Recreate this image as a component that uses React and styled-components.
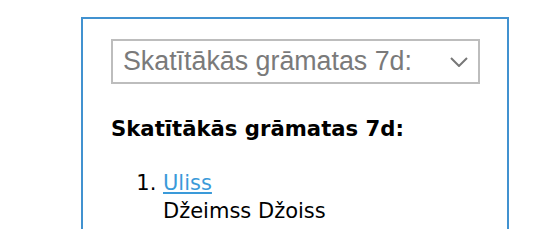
import React from "react";
import styled, { createGlobalStyle } from "styled-components";

const Global = createGlobalStyle`
  html, body { margin: 0; padding: 0; background: #fff; }
  body { font-family: "DejaVu Sans", Verdana, sans-serif; }
`;

const Page = styled.div`
  padding: 17px 0 0 81px;
  height: 229px;
  box-sizing: border-box;
  overflow: hidden;
`;

const Panel = styled.section`
  width: 428px;
  height: 260px;
  box-sizing: border-box;
  border: 2px solid #4192d0;
  padding: 20px 27px 0 28px;
`;

const SelectBox = styled.div`
  display: flex;
  align-items: center;
  justify-content: space-between;
  height: 45px;
  box-sizing: border-box;
  border: 2px solid #bdbdbd;
  padding: 0 10px 0 10px;
  font-family: "Liberation Sans", Arial, sans-serif;
  font-size: 26.8px;
  color: #7a7a7a;
`;

const Heading = styled.h3`
  margin: 32px 0 0;
  font-family: "DejaVu Sans", Verdana, sans-serif;
  font-weight: bold;
  font-size: 21.2px;
  line-height: 25px;
  color: #000;
`;

const List = styled.ol`
  margin: 28px 0 0;
  padding-left: 52px;
  font-size: 21px;
  line-height: 28px;
  color: #000;
`;

const BookLink = styled.a`
  color: #3a9ad9;
  text-decoration: underline;
`;

const Chevron = () => (
  <svg width="18" height="10" viewBox="0 0 18 10">
    <polyline points="1,1 9,9 17,1" fill="none" stroke="#777" strokeWidth="2" />
  </svg>
);

export default function App() {
  return (
    <>
      <Global />
      <Page>
        <Panel>
          <SelectBox>
            <span>Skatītākās grāmatas 7d:</span>
            <Chevron />
          </SelectBox>
          <Heading>Skatītākās grāmatas 7d:</Heading>
          <List>
            <li>
              <BookLink href="#">Uliss</BookLink>
              <br />
              Džeimss Džoiss
            </li>
          </List>
        </Panel>
      </Page>
    </>
  );
}
